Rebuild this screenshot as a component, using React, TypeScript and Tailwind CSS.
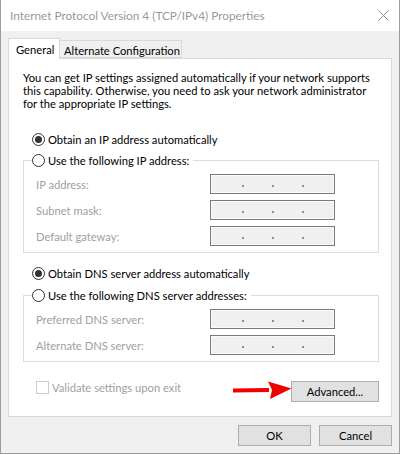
import React from "react";

const FONT = { fontFamily: 'Lato, "Noto Sans", sans-serif' };

function Radio({ checked }: { checked?: boolean }) {
  return (
    <span className="relative flex h-[13px] w-[13px] shrink-0 items-center justify-center rounded-full border border-[#333333] bg-white">
      {checked && <span className="h-[7px] w-[7px] rounded-full bg-[#333333]" />}
    </span>
  );
}

function IpBox() {
  return (
    <div className="flex h-[20px] w-[125px] items-center border border-[#7a7a7a] bg-[#f0f0f0] shadow-[inset_0_0_0_1px_#fafafa]">
      <div className="grid w-full grid-cols-[17px_30px_30px_30px] pt-[4px]">
        <span />
        <span className="mx-auto h-[2px] w-[2px] bg-[#8a8aa8]" />
        <span className="mx-auto h-[2px] w-[2px] bg-[#8a8aa8]" />
        <span className="mx-auto h-[2px] w-[2px] bg-[#8a8aa8]" />
      </div>
    </div>
  );
}

function Row({ label }: { label: string }) {
  return (
    <div className="flex h-[20px] items-center">
      <span className="w-[174px] whitespace-nowrap text-[#a0a0a0]">{label}</span>
      <IpBox />
    </div>
  );
}

function Group({ legend, rows }: { legend: string; rows: string[] }) {
  return (
    <fieldset className="border border-[#dcdcdc] pb-[6px]">
      <legend className="ml-[8px] flex h-[14px] items-center gap-[3px] whitespace-nowrap bg-white pr-[4px]">
        <Radio />
        <span>{legend}</span>
      </legend>
      <div className="flex flex-col gap-[6px] pl-[12px] pt-[7px]">
        {rows.map((r) => (
          <Row key={r} label={r} />
        ))}
      </div>
    </fieldset>
  );
}

function Button({ children, w }: { children: React.ReactNode; w: string }) {
  return (
    <button className={`flex h-[21px] items-center justify-center border border-[#adadad] bg-[#e1e1e1] text-black ${w}`}>
      {children}
    </button>
  );
}

export default function App() {
  return (
    <div
      style={FONT}
      className="relative flex h-[454px] w-[400px] flex-col whitespace-nowrap border-b border-l border-r border-[#9d9d9d] bg-[#f0f0f0] text-[11.2px] leading-[13px] text-black"
    >
      {/* title bar */}
      <div className="flex h-[31px] shrink-0 items-center justify-between bg-white pl-[9px] pr-[10px]">
        <span className="text-[11.8px] text-[#999999]">Internet Protocol Version 4 (TCP/IPv4) Properties</span>
        <svg width="11" height="11" viewBox="0 0 11 11">
          <path d="M0.5 0.5 L10.5 10.5 M10.5 0.5 L0.5 10.5" stroke="#8a8a8a" strokeWidth="1" />
        </svg>
      </div>

      <div className="px-[7px] pt-[7px]">
        {/* tabs */}
        <div className="relative z-10 flex h-[20px] items-end">
          <div className="-mb-px flex h-[21px] w-[52px] items-start border border-b-0 border-[#d9d9d9] bg-white pl-[7px] pt-[4px]">
            General
          </div>
          <div className="flex h-[18px] w-[122px] items-start border border-l-0 border-[#d9d9d9] bg-[#f0f0f0] pl-[4px] pt-[3px]">
            Alternate Configuration
          </div>
        </div>

        {/* panel */}
        <div className="flex h-[359px] w-[384px] flex-col border border-[#d9d9d9] bg-white pl-[14px] pr-[12px] pt-[12px]">
          <p>
            You can get IP settings assigned automatically if your network supports
            <br />
            this capability. Otherwise, you need to ask your network administrator
            <br />
            for the appropriate IP settings.
          </p>

          <div className="mt-[22px] flex h-[14px] items-center gap-[3px] pl-[9px]">
            <Radio checked />
            <span>Obtain an IP address automatically</span>
          </div>

          <div className="mt-[7px]">
            <Group legend="Use the following IP address:" rows={["IP address:", "Subnet mask:", "Default gateway:"]} />
          </div>

          <div className="mt-[13px] flex h-[14px] items-center gap-[3px] pl-[9px]">
            <Radio checked />
            <span>Obtain DNS server address automatically</span>
          </div>

          <div className="mt-[8px]">
            <Group legend="Use the following DNS server addresses:" rows={["Preferred DNS server:", "Alternate DNS server:"]} />
          </div>

          <div className="mt-[18px] flex items-start justify-between">
            <div className="flex items-center gap-[3px] pl-[13px] pt-[1px] text-[#a0a0a0]">
              <span className="h-[13px] w-[13px] border border-[#cccccc] bg-white" />
              <span>Validate settings upon exit</span>
            </div>
            <div className="pt-[1px]">
              <Button w="w-[88px]">Advanced...</Button>
            </div>
          </div>
        </div>

        {/* bottom buttons */}
        <div className="mt-[8px] flex justify-end gap-[8px]">
          <Button w="w-[73px]">OK</Button>
          <Button w="w-[73px]">Cancel</Button>
        </div>
      </div>

      {/* red annotation arrow */}
      <svg className="absolute left-[231px] top-[381px]" width="61" height="19" viewBox="0 0 61 19">
        <path d="M1 7.5 L37 7 L37 11 L1 11.5 Z" fill="#f00000" />
        <path d="M36 0.5 L59.5 7.5 L38 18 L40 9 Z" fill="#f00000" />
      </svg>
    </div>
  );
}
